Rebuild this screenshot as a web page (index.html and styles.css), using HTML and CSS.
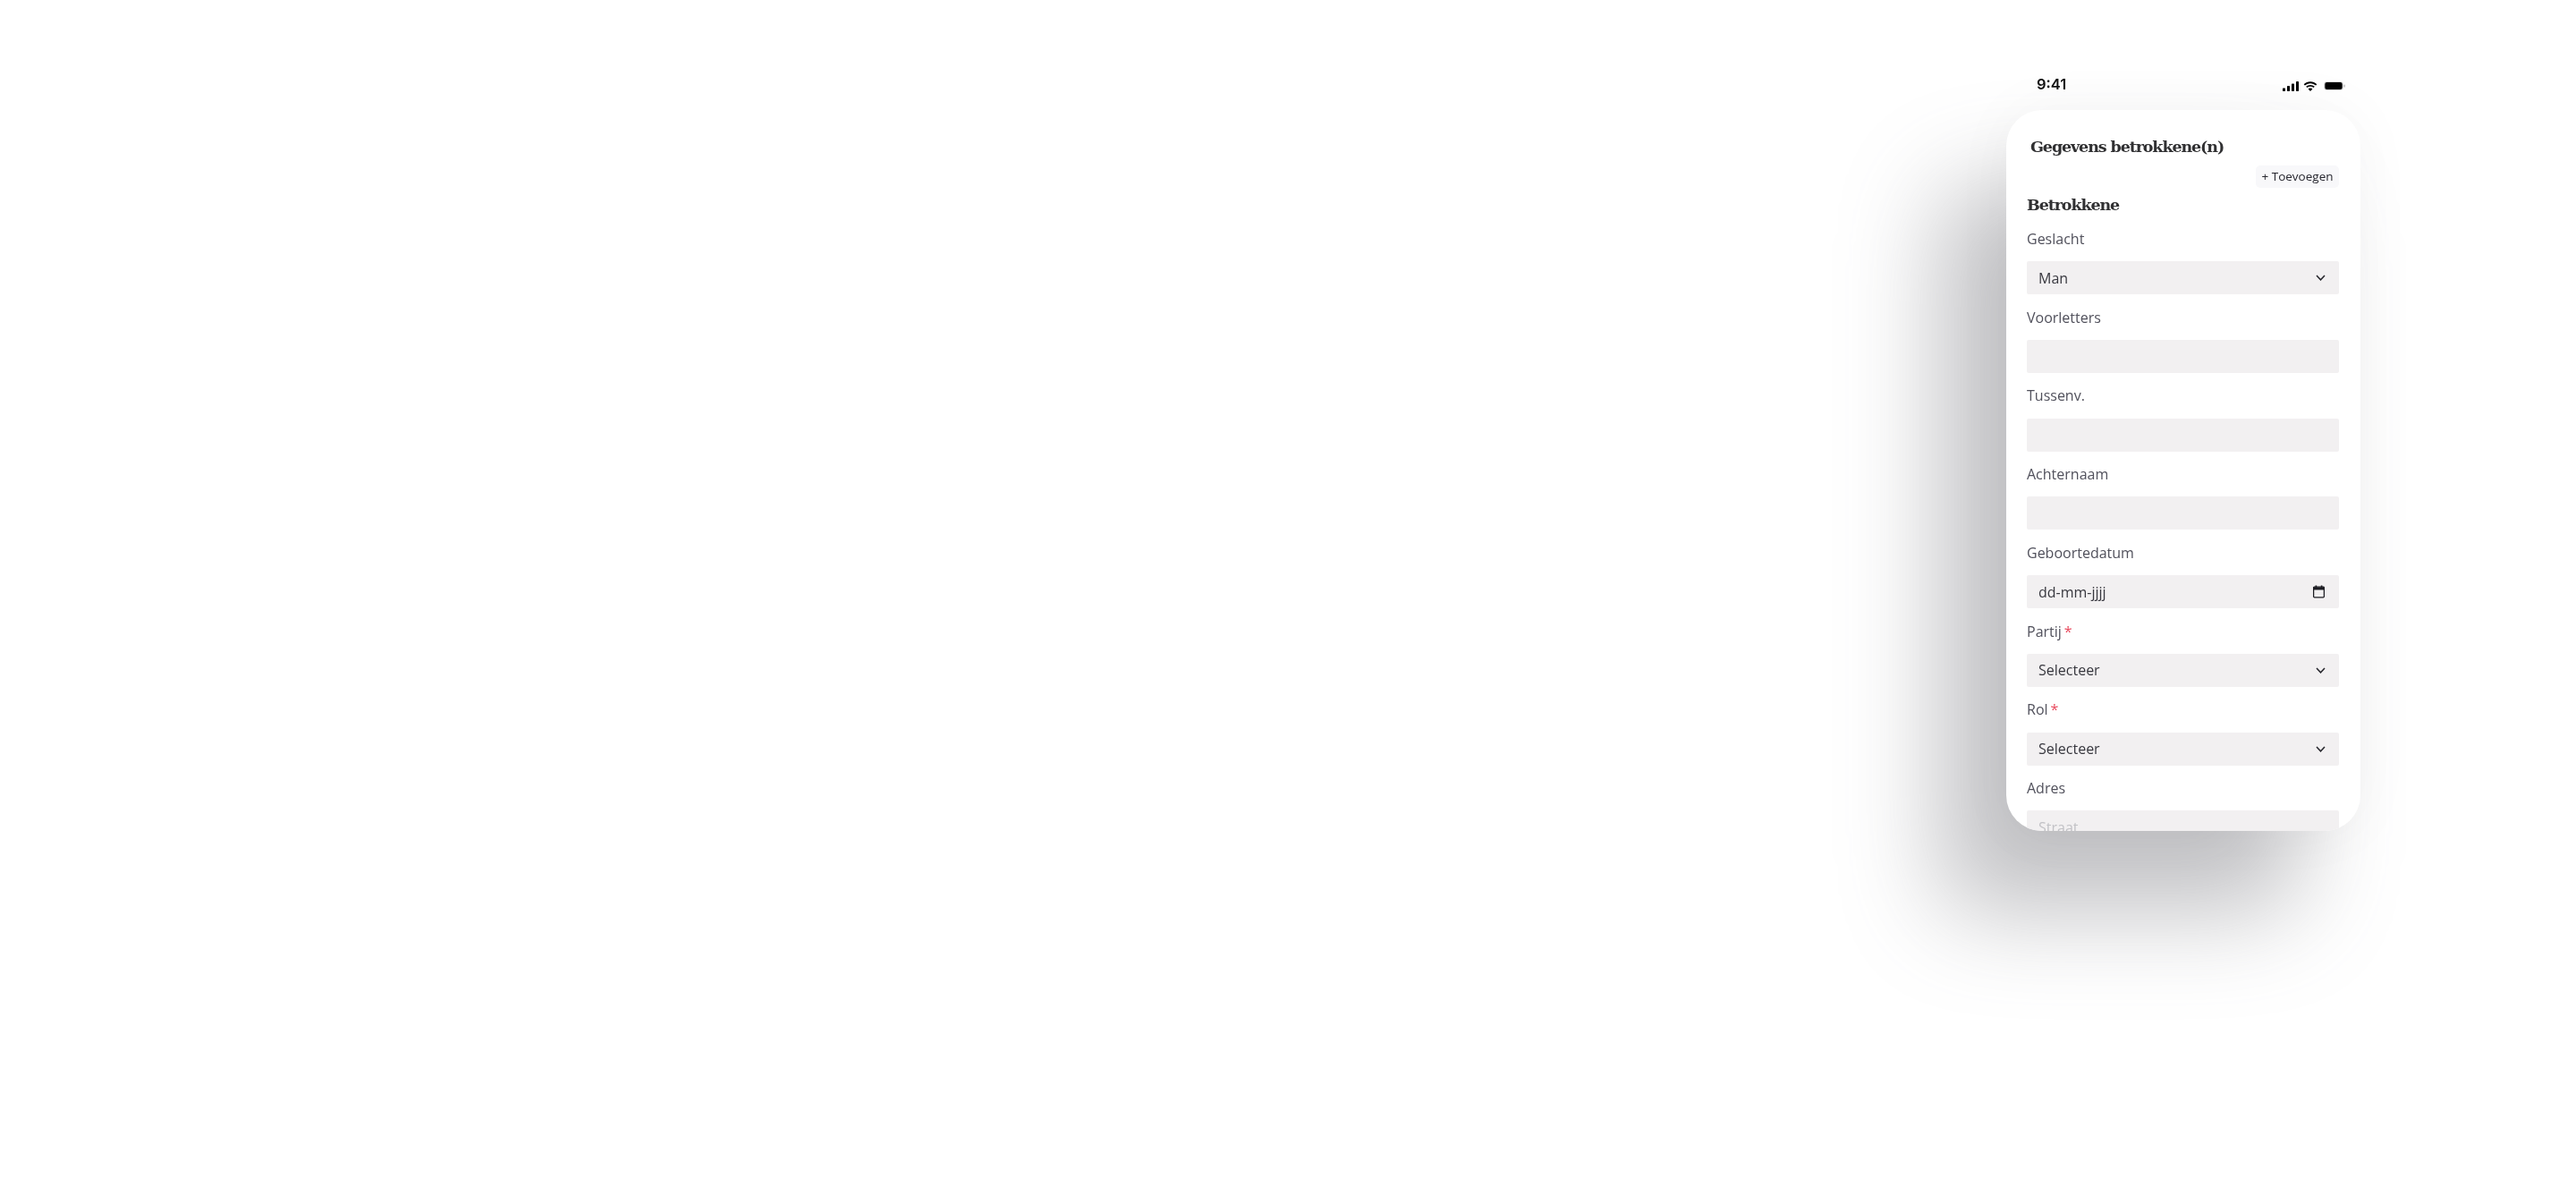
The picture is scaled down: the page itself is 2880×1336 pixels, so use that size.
FILE: index.html
```html
<!DOCTYPE html>
<html lang="nl">
<head>
<meta charset="utf-8">
<title>Gegevens betrokkene(n)</title>
<link rel="stylesheet" href="styles.css">
</head>
<body>
<div class="phone">
  <div class="status">
    <span class="time">9:41</span>
    <span class="status-icons">
      <svg class="ic-signal" viewBox="0 0 18 11"><rect x="0" y="7.5" width="3" height="3.5" rx=".7"/><rect x="5" y="5" width="3" height="6" rx=".7"/><rect x="10" y="2.5" width="3" height="8.5" rx=".7"/><rect x="15" y="0" width="3" height="11" rx=".7"/></svg>
      <svg class="ic-wifi" viewBox="0 0 16 11"><path d="M8 2.2c2.4 0 4.5.9 6.1 2.4l1.2-1.3C13.4 1.4 10.8.2 8 .2S2.600 1.400.7 3.300l1.200 1.300C3.500 3.100 5.600 2.200 8 2.200zM8 5.700c1.400 0 2.600.5 3.600 1.400l1.200-1.300C11.500 4.600 9.800 3.900 8 3.900s-3.500.7-4.800 1.900l1.200 1.300c1-.9 2.200-1.400 3.600-1.400zM8 11l2.400-2.500C9.700 7.900 8.900 7.500 8 7.500s-1.700.4-2.400 1z"/></svg>
      <svg class="ic-battery" viewBox="0 0 24 10"><rect x=".5" y=".5" width="21" height="9" rx="2.800" fill="none" stroke="#000" stroke-opacity=".14"/><rect x="1.300" y="1" width="19.400" height="8" rx="2"/><rect x="22.600" y="3.500" width="1" height="3" rx=".5" fill-opacity=".35"/></svg>
    </span>
  </div>
  <main class="card">
    <h1 class="title">Gegevens betrokkene(n)</h1>
    <div class="add-row"><button class="add">+ Toevoegen</button></div>
    <h2 class="subtitle">Betrokkene</h2>
    <div class="field">
      <div class="label">Geslacht</div>
      <div class="control">Man<svg class="chev" viewBox="0 0 11 7"><path d="M1 1l4.500 4.800L10 1"/></svg></div>
    </div>
    <div class="field">
      <div class="label">Voorletters</div>
      <div class="control"></div>
    </div>
    <div class="field">
      <div class="label">Tussenv.</div>
      <div class="control"></div>
    </div>
    <div class="field">
      <div class="label">Achternaam</div>
      <div class="control"></div>
    </div>
    <div class="field">
      <div class="label">Geboortedatum</div>
      <div class="control">dd-mm-jjjj<svg class="cal" viewBox="0 0 13 15"><path d="M1.600 2.200h9.800a1 1 0 0 1 1 1v9.600a1 1 0 0 1-1 1H1.600a1 1 0 0 1-1-1V3.200a1 1 0 0 1 1-1z" fill="none" stroke="#1c1c22" stroke-width="1.300"/><path d="M.6 2.600h11.800v2.900H.6zM2.600.6h1.600v2H2.600zM8.800.6h1.600v2H8.800z" fill="#1c1c22"/></svg></div>
    </div>
    <div class="field">
      <div class="label">Partij<span class="req">*</span></div>
      <div class="control">Selecteer<svg class="chev" viewBox="0 0 11 7"><path d="M1 1l4.500 4.800L10 1"/></svg></div>
    </div>
    <div class="field">
      <div class="label">Rol<span class="req">*</span></div>
      <div class="control">Selecteer<svg class="chev" viewBox="0 0 11 7"><path d="M1 1l4.500 4.800L10 1"/></svg></div>
    </div>
    <div class="field">
      <div class="label">Adres</div>
      <div class="control placeholder">Straat</div>
    </div>
  </main>
</div>
</body>
</html>
```
FILE: styles.css
```css
* { box-sizing: border-box; }
html, body { margin: 0; height: 100%; background: #fff; }
body {
  display: flex;
  justify-content: flex-end;
  align-items: flex-start;
  padding: 80px 241px 0 0;
  height: 1336px;
  overflow: hidden;
  font-family: "Open Sans", sans-serif;
}
.phone { width: 396px; display: flex; flex-direction: column; }
.status {
  height: 43px;
  display: flex;
  justify-content: space-between;
  align-items: flex-start;
  padding: 4px 17px 0 34px;
}
.time {
  font: 600 16.500px/20px Inter, sans-serif;
  color: #111;
  filter: blur(.35px);
}
.status-icons { display: flex; align-items: center; gap: 5px; margin-top: 6.500px; }
.status-icons svg { display: block; fill: #000; }
.ic-signal { width: 18px; height: 11px; }
.ic-wifi { width: 16px; height: 11px; }
.ic-battery { width: 24px; height: 10px; margin-left: 2px; }
.card {
  height: 806px;
  background: #fff;
  border-radius: 40px;
  overflow: hidden;
  padding: 25.500px 24px 0 23px;
  box-shadow: -72px 88px 110px 2px rgba(100, 100, 108, .40), 0 0 70px rgba(0, 0, 0, .04);
}
.title {
  margin: 0;
  padding-left: 4px;
  font: 700 17.500px/30px "DejaVu Serif", serif;
  letter-spacing: -1.100px;
  color: #303032;
  filter: blur(.4px);
}
.add-row { display: flex; justify-content: flex-end; margin-top: 6.500px; }
.add {
  height: 25px;
  width: 93px;
  padding: 0;
  border: 0;
  border-radius: 5px;
  background: #f8f8fa;
  font: 400 13.500px/25px "Open Sans", sans-serif;
  color: #26262e;
  filter: blur(.3px);
}
.subtitle {
  margin: 3.500px 0 -2.250px;
  font: 700 17.500px/30px "DejaVu Serif", serif;
  letter-spacing: -1.100px;
  color: #303032;
  filter: blur(.4px);
}
.field { height: 87.750px; }
.label {
  height: 50.750px;
  padding-top: 14.500px;
  font-size: 16px;
  line-height: 22px;
  color: #51515c;
  filter: blur(.3px);
}
.req { color: #e8485c; margin-left: 3px; }
.control {
  height: 37px;
  display: flex;
  align-items: center;
  justify-content: space-between;
  padding: 0 16px 0 13px;
  background: #f2f0f1;
  border-radius: 2px;
  font-size: 16px;
  color: #38383f;
  filter: blur(.25px);
}
.placeholder { color: #c2c2c6; }
.chev { width: 11px; height: 7px; fill: none; stroke: #26262c; stroke-width: 1.500; margin-right: -1px; }
.cal { width: 13px; height: 15px; }
```
